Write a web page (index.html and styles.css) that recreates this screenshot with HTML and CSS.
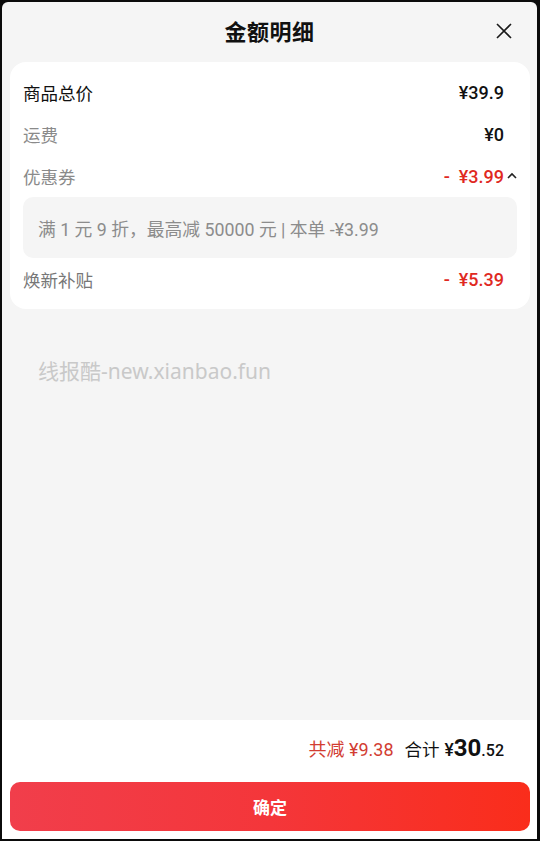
FILE: index.html
```html
<!DOCTYPE html>
<html lang="zh-CN">
<head>
<meta charset="utf-8">
<title>金额明细</title>
<link rel="stylesheet" href="styles.css">
</head>
<body>
<div class="sheet">
  <header class="header">
    <h1 class="title">金额明细</h1>
    <button class="close" aria-label="关闭">
      <svg width="16" height="16" viewBox="0 0 16 16"><path d="M1 1L15 15M15 1L1 15" stroke="#1a1a1a" stroke-width="1.6" fill="none"/></svg>
    </button>
  </header>
  <main class="content">
    <section class="card">
      <div class="row">
        <span class="label strong">商品总价</span>
        <span class="amount">¥39.9</span>
      </div>
      <div class="row">
        <span class="label">运费</span>
        <span class="amount">¥0</span>
      </div>
      <div class="row">
        <span class="label">优惠券</span>
        <span class="amount red with-caret">-&nbsp;&nbsp;¥3.99<svg class="caret" width="10" height="7" viewBox="0 0 10 7"><polyline points="1,6 5,2 9,6" stroke="#222" stroke-width="1.6" fill="none"/></svg></span>
      </div>
      <div class="detail">满 1 元 9 折，最高减 50000 元 | 本单 -¥3.99</div>
      <div class="row">
        <span class="label mid">焕新补贴</span>
        <span class="amount red">-&nbsp;&nbsp;¥5.39</span>
      </div>
    </section>
    <p class="watermark">线报酷-new.xianbao.fun</p>
  </main>
  <footer class="footer">
    <div class="summary">
      <span class="saved">共减 ¥9.38</span>
      <span class="total">合计 <span class="yen">¥</span><span class="big">30</span><span class="small">.52</span></span>
    </div>
    <button class="confirm">确定</button>
  </footer>
</div>
</body>
</html>
```

FILE: styles.css
```css
* { box-sizing: border-box; }
html, body { margin: 0; padding: 0; }
body {
  width: 540px;
  height: 841px;
  background: #0b0b0b;
  font-family: Roboto, "Noto Sans CJK SC", sans-serif;
  overflow: hidden;
}
.sheet {
  margin: 2px 3px 2px 2px;
  height: 837px;
  background: #f5f5f5;
  border-radius: 6px 6px 0 0;
  display: flex;
  flex-direction: column;
  overflow: hidden;
}
.header {
  height: 60px;
  display: flex;
  align-items: center;
  justify-content: center;
  position: relative;
  flex: none;
}
.title {
  margin: 0 0 5px;
  font-family: "Noto Sans CJK SC", sans-serif;
  font-size: 22px;
  font-weight: 700;
  color: #111;
  letter-spacing: 0.5px;
}
.close {
  position: absolute;
  right: 25px;
  top: 21px;
  width: 16px;
  height: 16px;
  padding: 0;
  border: 0;
  background: none;
  display: flex;
}
.content {
  flex: 1;
  padding: 0 7px 0 8px;
}
.card {
  background: #fff;
  border-radius: 16px;
  padding: 9px 13px;
}
.row {
  height: 42px;
  display: flex;
  align-items: center;
  justify-content: space-between;
}
.label {
  font-family: "Noto Sans CJK SC", sans-serif;
  font-size: 17.5px;
  color: #8a8a8a;
}
.label.strong { color: #111; }
.label.mid { color: #777; }
.amount {
  font-family: Roboto, "Noto Sans CJK SC", sans-serif;
  font-size: 18px;
  font-weight: 500;
  color: #111;
  padding-right: 13px;
  display: flex;
  align-items: center;
}
.amount.red { color: #e0291f; }
.amount.with-caret { padding-right: 0; }
.caret { margin-left: 3px; margin-top: -2px; }
.detail {
  height: 61px;
  background: #f5f5f5;
  border-radius: 10px;
  display: flex;
  align-items: center;
  padding-left: 15px;
  font-family: Roboto, "Noto Sans CJK SC", sans-serif;
  font-size: 17.8px;
  color: #8c8c8c;
}
.watermark {
  margin: 46px 0 0 28px;
  font-family: "Noto Sans", "Noto Sans CJK SC", sans-serif;
  font-size: 21px;
  color: #c9c9c9;
}
.footer {
  flex: none;
  height: 119px;
  background: #fff;
  padding: 0 7px 8px 8px;
  display: flex;
  flex-direction: column;
}
.summary {
  height: 56px;
  display: flex;
  align-items: center;
  justify-content: flex-end;
  padding-right: 26px;
  gap: 11px;
}
.saved {
  font-family: Roboto, "Noto Sans CJK SC", sans-serif;
  font-size: 18px;
  color: #d23d32;
}
.total {
  font-size: 17.5px;
  color: #111;
  display: flex;
  align-items: baseline;
}
.total .yen { margin-left: 5px; font-weight: 500; }
.total .big { font-size: 24px; font-weight: 700; }
.total .small { font-size: 16px; font-weight: 500; }
.confirm {
  margin-top: 6px;
  height: 49px;
  width: 100%;
  border: 0;
  border-radius: 10px;
  background: linear-gradient(90deg, #f13e4b 0%, #f4363a 50%, #fa2d1b 100%);
  color: #fff;
  font-family: "Noto Sans CJK SC", sans-serif;
  font-size: 17px;
  font-weight: 700;
}
```
